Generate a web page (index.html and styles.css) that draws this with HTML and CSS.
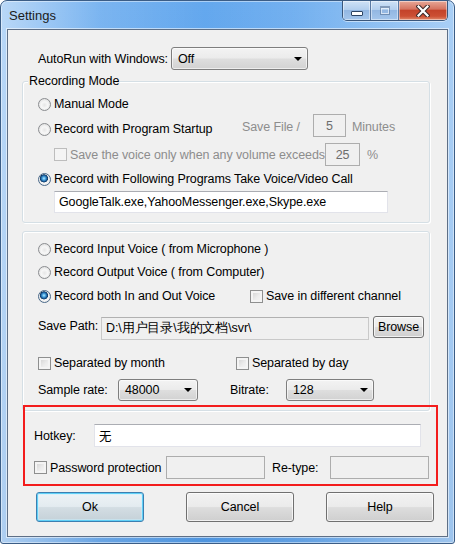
FILE: index.html
```html
<!DOCTYPE html>
<html lang="en">
<head>
    <meta charset="UTF-8">
    <meta name="viewport" content="width=device-width, initial-scale=1.0">
    <title>Settings</title>
    <link rel="stylesheet" href="styles.css">
</head>
<body>
<div class="window">
    <div class="titlebar">
        <span class="title">Settings</span>
        <div class="caption">
            <span class="cap-btn cap-min"><span class="min-bar"></span></span>
            <span class="cap-btn cap-max"><span class="max-box"></span></span>
            <span class="cap-btn cap-close">
                <svg width="14" height="12" viewBox="0 0 14 12">
                    <path d="M2.5 1.5 L11.5 10.5 M11.5 1.5 L2.5 10.5" stroke="#3b2a2a" stroke-width="4.2" stroke-linecap="square" fill="none"/>
                    <path d="M2.5 1.5 L11.5 10.5 M11.5 1.5 L2.5 10.5" stroke="#ffffff" stroke-width="2.2" stroke-linecap="square" fill="none"/>
                </svg>
            </span>
        </div>
    </div>

    <div class="client">
        <div class="autorun">
            <span class="autorun-label">AutoRun with Windows:</span>
            <div class="combo combo-autorun"><span>Off</span><i class="arrow"></i></div>
        </div>

        <!-- recording mode -->
        <div class="group group-mode">
            <div class="legend">Recording Mode</div>
            <div class="row row-manual">
                <label class="opt"><span class="radio"></span>Manual Mode</label>
            </div>
            <div class="row row-startup">
                <label class="opt opt-startup"><span class="radio"></span>Record with Program Startup</label>
                <span class="dim save-file">Save File /</span>
                <span class="edit edit-off edit-min">5</span>
                <span class="dim minutes">Minutes</span>
            </div>
            <div class="row row-volume">
                <label class="opt dim opt-volume"><span class="check check-off"></span>Save the voice only when any volume exceeds</label>
                <span class="edit edit-off edit-vol">25</span>
                <span class="dim percent">%</span>
            </div>
            <div class="row row-follow">
                <label class="opt"><span class="radio on"></span>Record with Following Programs Take Voice/Video Call</label>
            </div>
            <div class="edit edit-programs">GoogleTalk.exe,YahooMessenger.exe,Skype.exe</div>
        </div>

        <!-- voice source -->
        <div class="group group-voice">
            <div class="row row-a">
                <label class="opt"><span class="radio"></span>Record Input Voice ( from Microphone )</label>
            </div>
            <div class="row row-b">
                <label class="opt"><span class="radio"></span>Record Output Voice ( from Computer)</label>
            </div>
            <div class="row row-c">
                <label class="opt opt-both"><span class="radio on"></span>Record both In and Out Voice</label>
                <label class="opt"><span class="check"></span>Save in different channel</label>
            </div>
            <div class="row row-path">
                <span class="path-label">Save Path:</span>
                <span class="edit edit-ro edit-path">D:\用户目录\我的文档\svr\</span>
                <span class="btn btn-browse">Browse</span>
            </div>
            <div class="row row-sep">
                <label class="opt opt-month"><span class="check"></span>Separated by month</label>
                <label class="opt"><span class="check"></span>Separated by day</label>
            </div>
            <div class="row row-sample">
                <span class="sample-label">Sample rate:</span>
                <div class="combo combo-sample"><span>48000</span><i class="arrow"></i></div>
                <span class="bitrate-label">Bitrate:</span>
                <div class="combo combo-bitrate"><span>128</span><i class="arrow"></i></div>
            </div>
        </div>

        <!-- highlighted area -->
        <div class="highlight">
            <div class="row row-hotkey">
                <span class="hotkey-label">Hotkey:</span>
                <span class="edit edit-hotkey">无</span>
            </div>
            <div class="row row-pass">
                <label class="opt opt-pass"><span class="check"></span>Password protection</label>
                <span class="edit edit-off edit-pass"></span>
                <span class="retype-label">Re-type:</span>
                <span class="edit edit-off edit-pass"></span>
            </div>
        </div>

        <div class="buttons">
            <span class="btn btn-main btn-default">Ok</span>
            <span class="btn btn-main btn-cancel">Cancel</span>
            <span class="btn btn-main btn-help">Help</span>
        </div>
    </div>
</div>
</body>
</html>
```

FILE: styles.css
```css
body {
    margin: 0;
    background: #ffffff;
    font-family: "Liberation Sans", Arial, sans-serif;
    font-size: 12.5px;
    letter-spacing: -0.1px;
    color: #000;
    white-space: nowrap;
}

.window {
    width: 455px;
    height: 544px;
    box-sizing: border-box;
    border: 1px solid #3b5d86;
    border-radius: 7px 7px 3px 3px;
    background:
        linear-gradient(90deg, rgba(255, 255, 255, 0.55) 0%, rgba(255, 255, 255, 0.15) 22%, rgba(255, 255, 255, 0) 45%, rgba(255, 255, 255, 0.1) 65%, rgba(255, 255, 255, 0.45) 100%),
        linear-gradient(180deg, #64a8ee 0%, #5a9fe8 60%, #4f95df 100%);
    box-shadow: inset 0 0 0 1px rgba(255, 255, 255, 0.45);
    display: flex;
    flex-direction: column;
}

.titlebar {
    height: 28px;
    display: flex;
    align-items: flex-start;
}

.title {
    margin: 7px 0 0 8px;
    line-height: 16px;
    font-size: 13px;
    letter-spacing: 0;
    color: #1b1b1b;
}

.caption {
    margin-left: auto;
    margin-right: 6px;
    display: flex;
    height: 19px;
    border: 1px solid #3a577c;
    border-top: none;
    border-radius: 0 0 5px 5px;
    overflow: hidden;
    box-shadow: 0 1px 0 rgba(255, 255, 255, 0.5);
}

.cap-btn {
    display: flex;
    align-items: center;
    justify-content: center;
    height: 19px;
    box-shadow: inset 0 0 0 1px rgba(255, 255, 255, 0.45);
}

.cap-min,
.cap-max {
    width: 27px;
    background: linear-gradient(180deg, #cfe2f6 0%, #b3cfee 45%, #93b7e2 50%, #a4c6ec 100%);
    border-right: 1px solid #5a7aa3;
}

.cap-close {
    width: 48px;
    background: linear-gradient(180deg, #e7a898 0%, #d57461 42%, #c4432a 50%, #cc4f33 80%, #e08a6c 100%);
}

.min-bar {
    width: 10px;
    height: 3px;
    margin-top: 5px;
    background: #fff;
    border: 1px solid #2c4464;
    border-radius: 1px;
}

.max-box {
    width: 8px;
    height: 6px;
    border: 1px solid rgba(60, 85, 120, 0.45);
    box-shadow: inset 0 0 0 1px rgba(255, 255, 255, 0.6);
    border-top-width: 2px;
}

.client {
    margin-left: 6px;
    width: 441px;
    height: 508px;
    box-sizing: border-box;
    border: 1px solid #5e6f86;
    background: #f0f0f0;
    box-shadow: 0 0 0 1px rgba(255, 255, 255, 0.55);
    display: flex;
    flex-direction: column;
    align-items: flex-start;
}

/* generic controls */

.row {
    display: flex;
    align-items: center;
}

.opt {
    display: flex;
    align-items: center;
}

.radio,
.check {
    flex: none;
    width: 13px;
    height: 13px;
    box-sizing: border-box;
    margin-right: 3px;
}

.radio {
    border-radius: 50%;
    border: 1px solid #8b8d90;
    background: radial-gradient(circle at 50% 55%, #e6e6e6 0%, #f7f7f7 40%, #d4d4d4 100%);
}

.radio.on {
    border-color: #4b6a8a;
    background:
        radial-gradient(circle at 45% 40%, #b6ecff 0px, #4aa4e0 1.6px, #1a5d9a 3px, #0c3561 3.8px, rgba(12, 53, 97, 0) 4.3px),
        radial-gradient(circle at 50% 55%, #e6e6e6 0%, #f7f7f7 40%, #d4d4d4 100%);
}

.check {
    border: 1px solid #8e8f8f;
    background: linear-gradient(135deg, #cfcfcf 0%, #ececec 55%, #f7f7f7 100%);
    box-shadow: inset 0 0 0 2px #f4f4f4;
}

.check-off {
    border-color: #bdbdbd;
    background: #f4f4f4;
    box-shadow: none;
}

.dim {
    color: #8d8d8d;
}

.edit {
    box-sizing: border-box;
    display: flex;
    align-items: center;
    background: #ffffff;
    border: 1px solid #e2e3ea;
    border-top-color: #abadb3;
    padding-left: 4px;
}

.edit-off {
    background: #f0f0f0;
    border: 1px solid #adadad;
    color: #6d6d6d;
    justify-content: center;
    padding-left: 0;
}

.edit-ro {
    background: #f0f0f0;
    border: 1px solid #c9c9c9;
    border-top-color: #b1b1b1;
}

.combo {
    box-sizing: border-box;
    height: 23px;
    display: flex;
    align-items: center;
    padding-left: 6px;
    border: 1px solid #7e7e7e;
    border-radius: 3px;
    background: linear-gradient(180deg, #f3f3f3 0%, #ebebeb 48%, #dedede 52%, #d2d2d2 100%);
    box-shadow: inset 0 0 0 1px rgba(255, 255, 255, 0.6);
}

.arrow {
    margin-left: auto;
    margin-right: 5px;
    width: 0;
    height: 0;
    border-left: 4px solid transparent;
    border-right: 4px solid transparent;
    border-top: 4px solid #000;
}

.btn {
    box-sizing: border-box;
    display: flex;
    align-items: center;
    justify-content: center;
    border: 1px solid #707070;
    border-radius: 3px;
    background: linear-gradient(180deg, #f2f2f2 0%, #ebebeb 48%, #dddddd 52%, #cfcfcf 100%);
    box-shadow: inset 0 0 0 1px rgba(255, 255, 255, 0.7);
}

/* autorun */

.autorun {
    margin: 17px 0 0 30px;
    height: 23px;
    display: flex;
    align-items: center;
}

.autorun-label {
    width: 133px;
}

.combo-autorun {
    width: 137px;
}

/* group boxes */

.group {
    margin-left: 14px;
    width: 408px;
    box-sizing: border-box;
    border: 1px solid #d5dfe5;
    border-radius: 3px;
    padding: 0 0 9px 15px;
    box-shadow: inset 1px 1px 0 #ffffff, 1px 1px 0 #ffffff;
}

.legend {
    width: fit-content;
    margin: -8px 0 0 -10px;
    padding: 0 1px;
    height: 15px;
    line-height: 15px;
    background: #f0f0f0;
}

.group-mode {
    margin-top: 11px;
}

.row-manual {
    margin-top: 4px;
    height: 22px;
}

.row-startup {
    margin-top: -1px;
    height: 23px;
}

.opt-startup {
    width: 204px;
    margin-top: 7px;
}

.save-file {
    width: 71px;
    margin-top: 2px;
}

.edit-min {
    width: 33px;
    height: 23px;
}

.minutes {
    margin: 2px 0 0 6px;
}

.row-volume {
    margin: 6px 0 0 16px;
    height: 23px;
}

.opt-volume {
    width: 271px;
}

.edit-vol {
    width: 35px;
    height: 23px;
}

.percent {
    margin-left: 7px;
}

.row-follow {
    margin-top: 2px;
    height: 22px;
}

.edit-programs {
    margin: 1px 0 0 16px;
    width: 334px;
    height: 22px;
}

.group-voice {
    margin-top: 8px;
    padding-top: 6px;
}

.row-a {
    height: 22px;
}

.row-b {
    margin-top: 1px;
    height: 22px;
}

.row-c {
    margin-top: 2px;
    height: 22px;
}

.opt-both {
    width: 212px;
}

.row-path {
    margin-top: 9px;
    height: 24px;
}

.path-label {
    width: 63px;
    margin-bottom: 4px;
}

.edit-path {
    width: 268px;
    height: 23px;
}

.btn-browse {
    margin: 0 0 3px 4px;
    width: 51px;
    height: 22px;
}

.row-sep {
    margin-top: 12px;
    height: 22px;
}

.opt-month {
    width: 198px;
}

.row-sample {
    margin-top: 5px;
    height: 22px;
}

.sample-label {
    width: 80px;
}

.combo-sample {
    width: 80px;
    height: 22px;
}

.bitrate-label {
    margin-left: 32px;
    width: 56px;
}

.combo-bitrate {
    width: 88px;
    height: 22px;
}

/* red highlight */

.highlight {
    margin: -6px 0 0 15px;
    width: 415px;
    box-sizing: border-box;
    border: 2px solid #f31c1c;
    padding: 0 0 5px 9px;
}

.row-hotkey {
    margin-top: 17px;
    height: 23px;
}

.hotkey-label {
    width: 60px;
}

.edit-hotkey {
    width: 327px;
    height: 23px;
    font-family: "Liberation Sans", "Noto Sans CJK SC", sans-serif;
}

.row-pass {
    margin-top: 9px;
    height: 23px;
}

.opt-pass {
    width: 132px;
}

.edit-pass {
    width: 99px;
    height: 23px;
}

.retype-label {
    margin-left: 7px;
    width: 58px;
}

/* dialog buttons */

.buttons {
    margin: 6px 0 0 28px;
    display: flex;
}

.btn-main {
    width: 108px;
    height: 30px;
}

.btn-default {
    border-color: #3c7fb1;
    box-shadow: inset 0 0 0 1px #5fd0f7, inset 0 0 0 2px rgba(200, 240, 255, 0.5);
    background: linear-gradient(180deg, #eef3f6 0%, #e3ebf0 48%, #d3dde3 52%, #c5d1d8 100%);
}

.btn-cancel {
    margin-left: 42px;
}

.btn-help {
    margin-left: 32px;
}
```
